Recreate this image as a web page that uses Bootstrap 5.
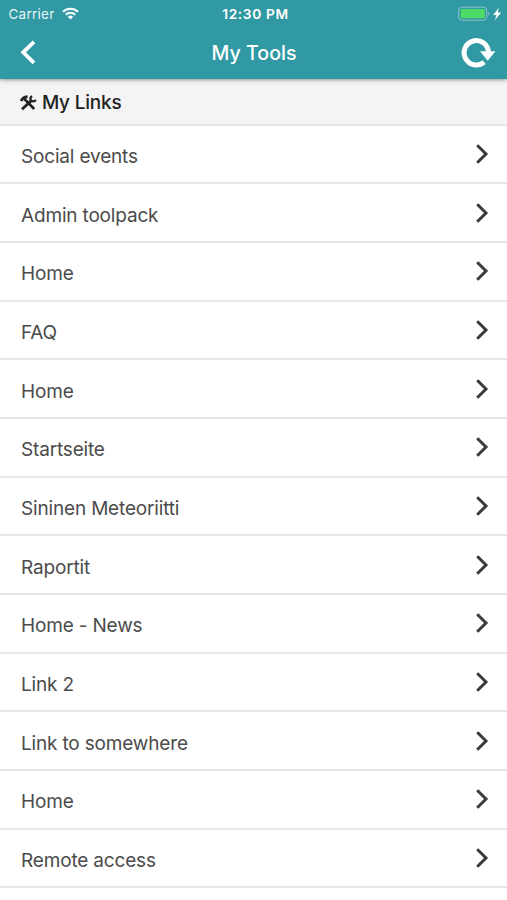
<!DOCTYPE html>
<html lang="en">
<head>
<meta charset="utf-8">
<meta name="viewport" content="width=device-width, initial-scale=1">
<title>My Tools</title>
<link href="https://cdn.jsdelivr.net/npm/bootstrap@5.3.0/dist/css/bootstrap.min.css" rel="stylesheet">
<style>
  body { font-family: Inter, "Liberation Sans", sans-serif; height: 900px; overflow: hidden; background: #fff; color: #222; }
  .app-top { background: #3099a3; color: #fff; height: 79px; box-shadow: 0 1px 4px rgba(0,0,0,.4); z-index: 2; }
  .status-row { height: 27px; line-height: 27px; }
  .carrier { font-size: 13.4px; padding: 1px 0 0 8.5px; letter-spacing: .3px; color: #e6f5f6; }
  .wifi { margin-left: 7px; }
  .clock { font-size: 13.7px; font-weight: 600; letter-spacing: .65px; padding: 1px 0 0 8px; }
  .title-row { height: 52px; line-height: 51px; }
  .app-title { font-size: 19.6px; font-weight: 500; margin-right: 7px; }
  .side { flex: 1 1 0; }
  .section-head { height: 46.8px; background: #f4f4f4; border-bottom: 2px solid #e6e6e6; padding-left: 20px; font-size: 18.9px; font-weight: 500; letter-spacing: -.15px; }
  .tools-icon { margin-top: 2.4px; }
  .section-title { padding-top: 4px; }
  .list-group .tool-row { height: 58.66px; border: 0; border-bottom: 2px solid #e7e7e7; border-radius: 0; padding: 0 18px 0 21px; font-size: 19px; letter-spacing: -.17px; color: #4b4b4b; }
  .tool-label { line-height: 24px; padding-top: 6px; }
  svg { display: block; flex: none; }
</style>
<script src="https://cdn.jsdelivr.net/npm/bootstrap@5.3.0/dist/js/bootstrap.bundle.min.js"></script>
</head>
<body>
<header class="app-top position-relative">
  <div class="status-row d-flex align-items-center">
    <div class="side d-flex align-items-center">
      <span class="carrier">Carrier</span>
      <svg class="wifi" width="17" height="13" viewBox="0 0 17 12" fill="none" stroke="#fff" stroke-width="2.1"><path d="M1 4.3a10.7 10.7 0 0 1 15 0M3.8 7.2a6.7 6.7 0 0 1 9.4 0"/><path d="M8.5 12 5.9 9.3a3.7 3.7 0 0 1 5.2 0z" fill="#fff" stroke="none"/></svg>
    </div>
    <div class="clock">12:30 PM</div>
    <div class="side d-flex align-items-center justify-content-end pe-1">
      <svg width="45" height="16" viewBox="0 0 45 16"><rect x=".7" y="1.2" width="28" height="13" rx="3" fill="none" stroke="#8cc6cc"/><rect x="2.6" y="3.1" width="24.2" height="9.2" rx="1.2" fill="#4cd964"/><path d="M30.4 5.5q2 2.2 0 4.4z" fill="#8cc6cc"/><path d="M40.8 1.8 35.2 8.9h3.2L36.9 14.2l6.3-7.6h-3.5z" fill="#fff"/></svg>
    </div>
  </div>
  <div class="title-row d-flex align-items-center">
    <div class="side ps-3"><svg class="ms-1" width="17" height="26" viewBox="0 0 17 26" fill="none" stroke="#fff" stroke-width="3.8"><path d="M14 1.8 3.2 12.3 14 22.8"/></svg></div>
    <div class="app-title">My Tools</div>
    <div class="side d-flex justify-content-end pe-2"><svg width="40" height="34" viewBox="0 0 40 34"><path d="M25.2 26.1A12.2 12.2 0 1 1 29.5 16.5" fill="none" stroke="#fff" stroke-width="5"/><path d="M21 15.3H36.4L28.7 24.7z" fill="#fff"/></svg></div>
  </div>
</header>
<main>
  <h1 class="section-head d-flex align-items-center mb-0">
    <svg class="tools-icon" width="17" height="16" viewBox="0 0 17 16" fill="none" stroke="#222"><path d="M4 3.5 14.2 14" stroke-width="2.6"/><path d="M1.2 6.2Q2.5 2.1 7.6 1.6" stroke-width="2.8"/><path d="M2 14.3 11.7 5.4" stroke-width="2.8"/><path d="M15.8 4.9a3 3 0 0 1-5 .3 3.1 3.1 0 0 1 1.3-4.1" stroke-width="2.2"/></svg>
    <span class="section-title">&nbsp;My Links</span>
  </h1>
  <div class="list-group" id="tools"></div>
</main>
<template id="tool">
  <a class="tool-row list-group-item d-flex align-items-center justify-content-between"><span class="tool-label"></span>
    <svg width="14" height="22" viewBox="0 0 14 22" fill="none" stroke="#3b3b3b" stroke-width="3"><path d="M2.2 2.2 11 11 2.2 19.8"/></svg></a>
</template>
<script>
  const names = ["Social events","Admin toolpack","Home","FAQ","Home","Startseite","Sininen Meteoriitti","Raportit","Home - News","Link 2","Link to somewhere","Home","Remote access"];
  const list = document.getElementById("tools"), tpl = document.getElementById("tool");
  names.forEach(n => {
    const row = tpl.content.cloneNode(true);
    row.querySelector(".tool-label").textContent = n;
    list.appendChild(row);
  });
</script>
</body>
</html>
